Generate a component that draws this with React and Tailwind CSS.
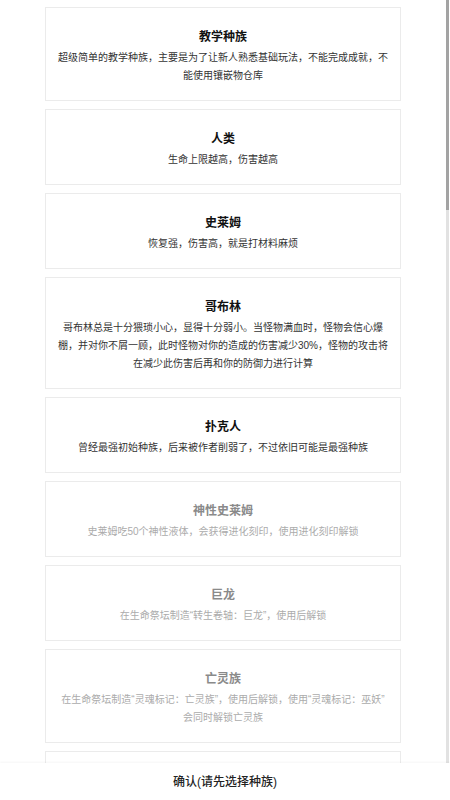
import React from 'react'

// \u200B lets the line break after a closing quote, like the source page does
const races = [
  {
    name: '教学种族',
    desc: '超级简单的教学种族，主要是为了让新人熟悉基础玩法，不能完成成就，不能使用镶嵌物仓库',
    locked: false,
  },
  { name: '人类', desc: '生命上限越高，伤害越高', locked: false },
  { name: '史莱姆', desc: '恢复强，伤害高，就是打材料麻烦', locked: false },
  {
    name: '哥布林',
    desc: '哥布林总是十分猥琐小心，显得十分弱小。当怪物满血时，怪物会信心爆棚，并对你不屑一顾，此时怪物对你的造成的伤害减少30%，怪物的攻击将在减少此伤害后再和你的防御力进行计算',
    locked: false,
  },
  {
    name: '扑克人',
    desc: '曾经最强初始种族，后来被作者削弱了，不过依旧可能是最强种族',
    locked: false,
  },
  {
    name: '神性史莱姆',
    desc: '史莱姆吃50个神性液体，会获得进化刻印，使用进化刻印解锁',
    locked: true,
  },
  { name: '巨龙', desc: '在生命祭坛制造“转生卷轴：巨龙”，使用后解锁', locked: true },
  {
    name: '亡灵族',
    desc: '在生命祭坛制造“灵魂标记：亡灵族”，使用后解锁，使用“灵魂标记：巫妖”\u200B会同时解锁亡灵族',
    locked: true,
  },
  { name: '机械族', desc: '在生命祭坛制造“转生卷轴：机械”，使用后解锁', locked: true },
]

function RaceCard({ race }) {
  return (
    <div className="border border-[#ebebeb] bg-white px-[11.5px] pt-[19px] pb-[15px] text-center">
      <h3
        className={`text-[12px] leading-[20px] font-bold ${
          race.locked ? 'text-[#8a8a8a]' : 'text-[#111]'
        }`}
      >
        {race.name}
      </h3>
      <p
        className={`mt-[2px] text-[10px] leading-[18px] ${
          race.locked ? 'text-[#ababab]' : 'text-[#333]'
        }`}
      >
        {race.desc}
      </p>
    </div>
  )
}

export default function App() {
  return (
    <div
      className="h-[800px] w-[450px] flex flex-col bg-white overflow-hidden"
      style={{ fontFamily: '"Liberation Sans", "Noto Sans CJK SC", sans-serif' }}
    >
      {/* LIST */}
      <div className="h-[763px] flex">
        <div className="flex-1 overflow-hidden">
          <div className="w-[80%] mx-auto pt-[7px] flex flex-col gap-2">
            {races.map((race) => (
              <RaceCard key={race.name} race={race} />
            ))}
          </div>
        </div>

        {/* SCROLLBAR */}
        <div className="w-[3px] mr-px bg-[#e2e2e2] flex flex-col">
          <div className="h-[210px] bg-[#a3a3a3]" />
        </div>
      </div>

      {/* CONFIRM */}
      <div className="h-[37px] flex items-center justify-center bg-white text-[12px] text-[#222] font-medium shadow-[0_-1px_2px_rgba(0,0,0,0.04)] z-10">
        确认(请先选择种族)
      </div>
    </div>
  )
}
